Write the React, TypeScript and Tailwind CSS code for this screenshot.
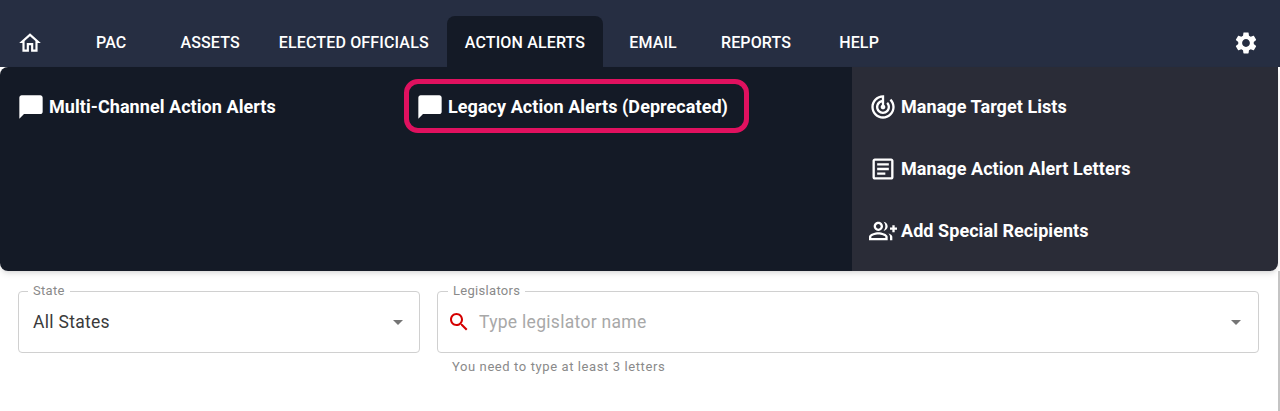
import { ReactNode } from 'react';

const font = { fontFamily: 'Roboto, sans-serif' };

const tabs = [
  { label: 'PAC', className: 'ml-[18px]' },
  { label: 'ASSETS', className: 'ml-[18px]' },
  { label: 'ELECTED OFFICIALS', className: 'ml-[3px]' },
  { label: 'ACTION ALERTS', className: 'bg-[#141a26] rounded-t-lg' },
  { label: 'EMAIL', className: 'ml-2' },
  { label: 'REPORTS', className: 'ml-2' },
  { label: 'HELP', className: 'ml-3' },
];

function Icon({ d, className = 'w-6 h-6' }: { d: string; className?: string }) {
  return (
    <svg viewBox="0 0 24 24" fill="currentColor" className={className}>
      <path d={d} />
    </svg>
  );
}

const icons = {
  home: 'M12 5.69l5 4.5V18h-2v-6H9v6H7v-7.81l5-4.5M12 3L2 12h3v8h6v-6h2v6h6v-8h3L12 3z',
  chat: 'M20 2H4c-1.1 0-2 .9-2 2v18l4-4h14c1.1 0 2-.9 2-2V4c0-1.1-.9-2-2-2z',
  target:
    'M19.07 4.93l-1.41 1.41C19.1 7.79 20 9.79 20 12c0 4.42-3.58 8-8 8s-8-3.58-8-8c0-4.08 3.05-7.44 7-7.93v2.02C8.16 6.57 6 9.03 6 12c0 3.31 2.69 6 6 6s6-2.69 6-6c0-1.66-.67-3.16-1.76-4.24l-1.41 1.41C15.55 9.9 16 10.9 16 12c0 2.21-1.79 4-4 4s-4-1.79-4-4c0-1.86 1.28-3.41 3-3.86v2.14c-.6.35-1 .98-1 1.72 0 1.1.9 2 2 2s2-.9 2-2c0-.74-.4-1.38-1-1.72V2h-1C6.48 2 2 6.48 2 12s4.48 10 10 10 10-4.48 10-10c0-2.76-1.12-5.26-2.93-7.07z',
  article:
    'M19 5v14H5V5h14m0-2H5c-1.1 0-2 .9-2 2v14c0 1.1.9 2 2 2h14c1.1 0 2-.9 2-2V5c0-1.1-.9-2-2-2zM14 17H7v-2h7v2zm3-4H7v-2h10v2zm0-4H7V7h10v2z',
  group:
    'M22 9V7h-2v2h-2v2h2v2h2v-2h2V9h-2zM8 12c2.21 0 4-1.79 4-4s-1.79-4-4-4-4 1.79-4 4 1.79 4 4 4zm0-6c1.1 0 2 .9 2 2s-.9 2-2 2-2-.9-2-2 .9-2 2-2zM8 13c-2.67 0-8 1.34-8 4v3h16v-3c0-2.66-5.33-4-8-4zm6 5H2v-.99C2.2 16.29 5.3 15 8 15s5.8 1.29 6 2v1zM12.51 4.05C13.43 5.11 14 6.49 14 8s-.57 2.89-1.49 3.95C14.47 11.7 16 10.04 16 8s-1.53-3.7-3.49-3.95zM16.53 13.83c.89.83 1.47 1.87 1.47 3.17v3h2v-3c0-1.45-1.59-2.51-3.47-3.17z',
  settings:
    'M19.14 12.94c.04-.3.06-.61.06-.94 0-.32-.02-.64-.07-.94l2.03-1.58c.18-.14.23-.41.12-.61l-1.92-3.32c-.12-.22-.37-.29-.59-.22l-2.39.96c-.5-.38-1.03-.7-1.62-.94l-.36-2.54c-.04-.24-.24-.41-.48-.41h-3.84c-.24 0-.43.17-.47.41l-.36 2.54c-.59.24-1.13.57-1.62.94l-2.39-.96c-.22-.08-.47 0-.59.22L2.74 8.87c-.12.21-.08.47.12.61l2.03 1.58c-.05.3-.09.63-.09.94s.02.64.07.94l-2.03 1.58c-.18.14-.23.41-.12.61l1.92 3.32c.12.22.37.29.59.22l2.39-.96c.5.38 1.03.7 1.62.94l.36 2.54c.05.24.24.41.48.41h3.84c.24 0 .44-.17.47-.41l.36-2.54c.59-.24 1.13-.56 1.62-.94l2.39.96c.22.08.47 0 .59-.22l1.92-3.32c.12-.22.07-.47-.12-.61l-2.01-1.58zM12 15.6c-1.98 0-3.6-1.62-3.6-3.6s1.62-3.6 3.6-3.6 3.6 1.62 3.6 3.6-1.62 3.6-3.6 3.6z',
  search:
    'M15.5 14h-.79l-.28-.27C15.41 12.59 16 11.11 16 9.5 16 5.91 13.09 3 9.5 3S3 5.91 3 9.5 5.91 16 9.5 16c1.61 0 3.09-.59 4.23-1.57l.27.28v.79l5 4.99L20.49 19l-4.99-5zm-6 0C7.01 14 5 11.99 5 9.5S7.01 5 9.5 5 14 7.01 14 9.5 11.99 14 9.5 14z',
};

function MenuItem({ icon, children }: { icon: string; children: ReactNode }) {
  return (
    <div className="flex items-center gap-1 h-7 text-white text-[18px] font-bold tracking-[0.06px]">
      <Icon d={icon} className="w-7 h-7 shrink-0" />
      <span className="-mt-px">{children}</span>
    </div>
  );
}

function Field({
  label,
  className,
  labelClass,
  arrowClass,
  children,
}: {
  label: string;
  className: string;
  labelClass: string;
  arrowClass: string;
  children: ReactNode;
}) {
  return (
    <div className={`relative h-[62px] border border-[#d0d0d0] rounded flex items-center ${className}`}>
      <span className={`absolute -top-2 px-[5px] bg-white text-[13px] leading-[14px] tracking-[0.3px] text-[#8a8a8a] ${labelClass}`}>
        {label}
      </span>
      {children}
      <svg viewBox="0 0 24 24" fill="#757575" className={`absolute top-[18px] w-6 h-6 ${arrowClass}`}>
        <path d="M7 10l5 5 5-5z" />
      </svg>
    </div>
  );
}

export default function App() {
  return (
    <div className="relative w-[1280px] h-[411px] overflow-hidden bg-white" style={font}>
      {/* Nav */}
      <div className="flex items-end h-[67px] bg-[#262e42] text-white">
        <div className="flex items-center justify-center w-[60px] h-[51px] pt-[2px]">
          <Icon d={icons.home} className="w-[26px] h-[26px]" />
        </div>
        {tabs.map((tab) => (
          <div
            key={tab.label}
            className={`flex items-center h-[51px] px-[18px] pt-[2px] text-[16px] tracking-[0.15px] font-medium ${tab.className}`}
          >
            {tab.label}
          </div>
        ))}
        <div className="ml-auto mr-[21px] h-[51px] pt-[2px] flex items-center">
          <Icon d={icons.settings} className="w-[26px] h-[26px]" />
        </div>
      </div>

      {/* Action alerts menu */}
      <div className="flex w-[1278px] h-[204px] rounded-b-lg shadow-md overflow-hidden">
        <div className="flex w-[852px] bg-[#141a26] rounded-tl-lg pt-[26px] pl-[17px]">
          <div className="w-[399px]">
            <MenuItem icon={icons.chat}>Multi-Channel Action Alerts</MenuItem>
          </div>
          <div className="relative h-7">
            <MenuItem icon={icons.chat}>Legacy Action Alerts (Deprecated)</MenuItem>
            <div className="absolute -left-[12px] -right-[21px] -top-[14px] -bottom-[12px] border-[5px] border-[#e0115f] rounded-[14px]" />
          </div>
        </div>
        <div className="flex-1 flex flex-col gap-[34px] bg-[#2a2c37] pt-[26px] pl-[17px]">
          <MenuItem icon={icons.target}>Manage Target Lists</MenuItem>
          <MenuItem icon={icons.article}>Manage Action Alert Letters</MenuItem>
          <MenuItem icon={icons.group}>Add Special Recipients</MenuItem>
        </div>
      </div>

      {/* Filters */}
      <div className="flex gap-[17px] pt-5 pl-[18px]">
        <Field label="State" className="w-[402px] pl-[14px]" labelClass="left-[9px]" arrowClass="right-[9px]">
          <span className="text-[17.5px] tracking-[0.3px] text-[#3a3a3a]">All States</span>
        </Field>
        <div className="w-[822px]">
          <Field label="Legislators" className="w-full pl-[9px]" labelClass="left-[10px]" arrowClass="right-[10px]">
            <Icon d={icons.search} className="w-6 h-6 text-[#d50000] shrink-0" />
            <span className="ml-[8px] text-[17.5px] tracking-[0.3px] text-[#a8a8a8]">Type legislator name</span>
          </Field>
          <p className="mt-1 pl-[15px] text-[13px] tracking-[0.6px] text-[#8a8a8a]">
            You need to type at least 3 letters
          </p>
        </div>
      </div>

      {/* Scrollbar edge */}
      <div className="absolute right-0 top-[271px] bottom-0 w-[2px] bg-[#c4c4c4]" />
    </div>
  );
}
